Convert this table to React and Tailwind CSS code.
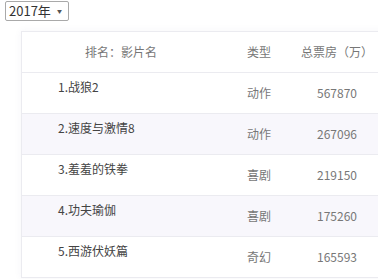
const MOVIES = [
  { rank: 1, name: "战狼2", type: "动作", box: 567870 },
  { rank: 2, name: "速度与激情8", type: "动作", box: 267096 },
  { rank: 3, name: "羞羞的铁拳", type: "喜剧", box: 219150 },
  { rank: 4, name: "功夫瑜伽", type: "喜剧", box: 175260 },
  { rank: 5, name: "西游伏妖篇", type: "奇幻", box: 165593 },
];

export default function App() {
  return (
    <div className="w-[378px] h-[279px] overflow-hidden bg-white font-['Noto_Sans_CJK_SC','Microsoft_YaHei',sans-serif] text-[12px]">
      {/* Year select */}
      <div className="ml-[5px] mt-[1px] w-[64px] h-[20px] border border-[#a9a9a9] rounded-[2px] flex items-center justify-between pl-[3px] pr-[6px] text-[13px] leading-[18px] text-[#333]">
        <span>2017年</span>
        <span className="text-[5px] text-[#555]">▼</span>
      </div>

      {/* Ranking table */}
      <div className="ml-[21px] mt-[10px] w-[380px] border-t border-l border-[#ebebf0] shadow-[0_0_8px_rgba(60,60,120,0.05)]">
        <div className="flex h-[41px] items-center border-b border-[#ebebf0] text-[#777]">
          <div className="w-[198px] text-center">排名：影片名</div>
          <div className="w-[78px] text-center">类型</div>
          <div className="w-[78px] text-center">总票房（万）</div>
        </div>
        {MOVIES.map((m, i) => (
          <div
            key={m.rank}
            className={`flex h-[41px] border-b border-[#ebebf0] ${i % 2 === 1 ? "bg-[#f8f7fc]" : "bg-white"}`}
          >
            <div className="w-[198px] pl-[36px] pt-[5px] leading-[18px] text-[#444]">
              {m.rank}.{m.name}
            </div>
            <div className="w-[78px] flex items-center justify-center text-[#777]">{m.type}</div>
            <div className="w-[78px] flex items-center justify-center text-[#777]">{m.box}</div>
          </div>
        ))}
      </div>
    </div>
  );
}
